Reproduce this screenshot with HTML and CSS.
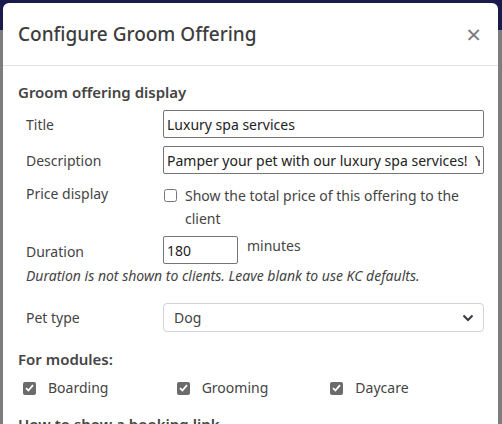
FILE: index.html
```html
<!DOCTYPE html>
<html lang="en">
<head>
    <meta charset="UTF-8">
    <title>Configure Groom Offering</title>
    <link rel="stylesheet" href="styles.css">
</head>
<body>
    <div class="modal">
        <div class="modal-header">
            <h4 class="modal-title">Configure Groom Offering</h4>
            <span class="close">&times;</span>
        </div>
        <div class="modal-body">
            <h5 class="section">Groom offering display</h5>

            <div class="row">
                <label class="lbl">Title</label>
                <input class="txt" type="text" value="Luxury spa services">
            </div>
            <div class="row">
                <label class="lbl">Description</label>
                <input class="txt" type="text" value="Pamper your pet with our luxury spa services!  Your pet will love it.">
            </div>
            <div class="row row-top">
                <label class="lbl">Price display</label>
                <label class="check-line">
                    <input class="chk" type="checkbox">
                    <span>Show the total price of this offering to the client</span>
                </label>
            </div>
            <div class="row row-duration">
                <label class="lbl">Duration</label>
                <input class="txt short" type="text" value="180">
                <span class="unit">minutes</span>
            </div>
            <p class="help">Duration is not shown to clients. Leave blank to use KC defaults.</p>
            <div class="row row-pet">
                <label class="lbl">Pet type</label>
                <div class="select-wrap">
                    <select class="sel">
                        <option>Dog</option>
                        <option>Cat</option>
                    </select>
                    <svg class="chev" width="12" height="8" viewBox="0 0 12 8"><path d="M1.5 1.5 L6 6 L10.5 1.5" fill="none" stroke="#343a40" stroke-width="2"/></svg>
                </div>
            </div>

            <h5 class="section modules-head">For modules:</h5>
            <div class="modules">
                <label class="mod"><span class="box"><svg width="9" height="8" viewBox="0 0 9 8"><path d="M1 4.2 L3.4 6.5 L8 1.2" fill="none" stroke="#fff" stroke-width="1.8"/></svg></span>Boarding</label>
                <label class="mod"><span class="box"><svg width="9" height="8" viewBox="0 0 9 8"><path d="M1 4.2 L3.4 6.5 L8 1.2" fill="none" stroke="#fff" stroke-width="1.8"/></svg></span>Grooming</label>
                <label class="mod"><span class="box"><svg width="9" height="8" viewBox="0 0 9 8"><path d="M1 4.2 L3.4 6.5 L8 1.2" fill="none" stroke="#fff" stroke-width="1.8"/></svg></span>Daycare</label>
            </div>

            <h5 class="section last">How to show a booking link</h5>
        </div>
    </div>
</body>
</html>
```

FILE: styles.css
```css
html, body{
    margin: 0;
    height: 100%;
    overflow: hidden;
}
body{
    background: linear-gradient(#1b1a4d 0, #1b1a4d 30px, #7d7d7d 30px);
    font-family: "Noto Sans", "Open Sans", sans-serif;
    color: #444;
    font-size: 14px;
}
.modal{
    margin: 3px 4px 0 3px;
    background: #fff;
    border-radius: 6px 6px 0 0;
    height: 460px;
}
.modal-header{
    display: flex;
    align-items: center;
    justify-content: space-between;
    padding: 16px 17px 16px 15px;
    border-bottom: 1px solid #dee2e6;
}
.modal-title{
    margin: 0;
    font-size: 19px;
    font-weight: 500;
    line-height: 30px;
    color: #3d3d3d;
}
.close{
    font-size: 26px;
    line-height: 24px;
    color: #7a7a7a;
}
.modal-body{
    padding: 15px 14px 0 15px;
}
.section{
    margin: 0;
    font-size: 15px;
    font-weight: 600;
    line-height: 22px;
    color: #444;
}
.row{
    display: flex;
    align-items: center;
    padding-left: 8px;
    margin-top: 8px;
}
.row:first-of-type{
    margin-top: 7px;
}
.lbl{
    width: 137px;
    flex: none;
}
.txt{
    flex: 1;
    min-width: 0;
    height: 28px;
    box-sizing: border-box;
    border: 1px solid #767676;
    border-radius: 2px;
    padding: 1px 3px;
    font: inherit;
    color: #222;
}
.txt.short{
    flex: none;
    width: 75px;
}
.row-top{
    align-items: flex-start;
    margin-top: 10px;
}
.check-line{
    display: flex;
    align-items: flex-start;
    line-height: 23px;
}
.chk{
    margin: 5px 8px 0 1px;
    width: 13px;
    height: 13px;
    flex: none;
}
.row-duration{
    margin-top: 6px;
    align-items: flex-start;
}
.row-duration .lbl{
    margin-top: 6px;
}
.unit{
    margin-left: 9px;
    line-height: 20px;
}
.help{
    margin: 1px 0 0 8px;
    font-style: italic;
    line-height: 22px;
}
.row-pet{
    margin-top: 16px;
}
.select-wrap{
    flex: 1;
    position: relative;
}
.sel{
    width: 100%;
    height: 29px;
    appearance: none;
    -webkit-appearance: none;
    border: 1px solid #ced4da;
    border-radius: 4px;
    background: #fff;
    padding: 0 10px;
    font: inherit;
    color: #444;
}
.chev{
    position: absolute;
    right: 10px;
    top: 11px;
}
.modules-head{
    margin-top: 16px;
}
.modules{
    display: flex;
    padding-left: 5px;
    margin-top: 7px;
    line-height: 22px;
}
.mod{
    display: flex;
    align-items: center;
    width: 155px;
}
.box{
    width: 13px;
    height: 13px;
    border-radius: 2px;
    background: #6b6b6b;
    display: flex;
    align-items: center;
    justify-content: center;
    margin-right: 12px;
}
.section.last{
    margin-top: 14px;
}
```
